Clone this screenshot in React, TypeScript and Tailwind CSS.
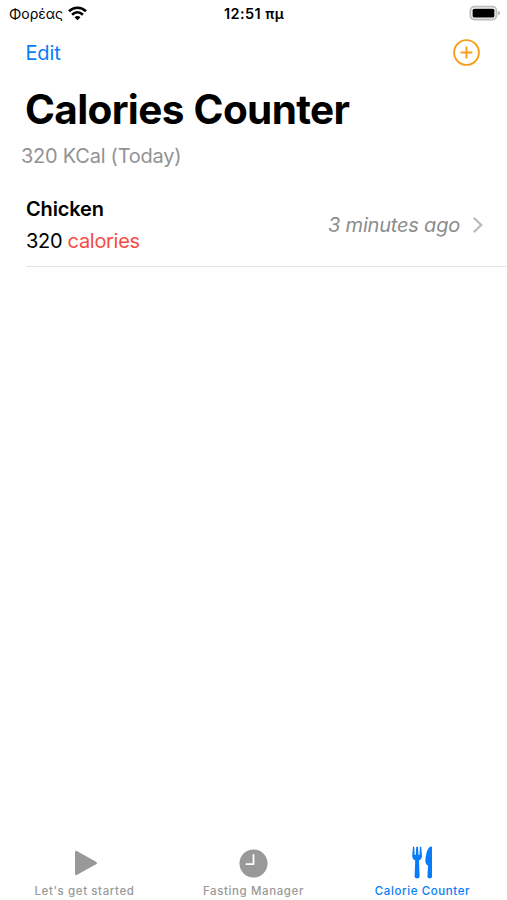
import React from "react";

function StatusBar() {
  return (
    <div className="grid h-7 grid-cols-3 items-center pl-[9px] pr-[6px] text-[14px] leading-7">
      <div className="flex items-center gap-[5px]">
        <span className="tracking-[0px]">Φορέας</span>
        <svg className="-mt-[2px]" width="19" height="15" viewBox="0 0 19 15" fill="none" stroke="#000" strokeWidth="2.6">
          <path d="M1 5.3C5.8 0.6 13.2 0.6 18 5.3" />
          <path d="M4.1 8.7C7.3 5.6 11.7 5.6 14.9 8.7" />
          <path d="M6.5 11.3C8.2 9.6 10.8 9.6 12.5 11.3L9.5 14.3Z" fill="#000" stroke="none" />
        </svg>
      </div>
      <span className="-ml-[2px] text-center text-[14.5px] font-semibold tracking-[0.4px]">12:51 πμ</span>
      <svg className="-mt-[2px] justify-self-end" width="32" height="16" viewBox="0 0 32 16">
        <rect x="1.4" y="1.7" width="26" height="12.8" rx="4" fill="#fff" stroke="#bcbcbc" strokeWidth="1.8" />
        <rect x="3.6" y="3.7" width="21.8" height="8.8" rx="1.6" fill="#000" />
        <path d="M29.2 5.7C31.4 6.5 31.4 9.5 29.2 10.3Z" fill="#a5a5a5" />
      </svg>
    </div>
  );
}

function Tab({ icon, label, active = false }: { icon: React.ReactNode; label: string; active?: boolean }) {
  return (
    <div className={`flex w-[169px] flex-col items-center ${active ? "text-[#087cf8]" : "text-[#999999]"}`}>
      <div className="flex h-10 items-center">{icon}</div>
      <span className="text-[11.5px] font-medium leading-4 tracking-[0.6px]">{label}</span>
    </div>
  );
}

export default function App() {
  return (
    <div className="flex h-[900px] w-[507px] flex-col overflow-hidden whitespace-nowrap bg-white font-['Inter','Noto_Sans',sans-serif] text-black">
      <StatusBar />
      <header className="flex h-12 items-center justify-between pl-[25.5px] pr-[27px]">
        <span className="pt-[2px] text-[20px] tracking-[-0.15px] text-[#087cf8]">Edit</span>
        <svg width="27" height="27" viewBox="0 0 27 27" fill="none" stroke="#f99d1c" strokeWidth="1.9" strokeLinecap="round">
          <circle cx="13.5" cy="13.5" r="12.4" />
          <path d="M13.5 8.3v10.4M8.3 13.5h10.4" />
        </svg>
      </header>
      <h1 className="mt-[9px] pl-[25px] text-[40.5px] font-bold leading-[50px] tracking-[-0.65px] [word-spacing:1px]">Calories Counter</h1>
      <p className="mt-[9px] pl-[21px] text-[20px] leading-6 tracking-[-0.25px] text-[#929292]">320 KCal (Today)</p>
      <div className="ml-[26px] mt-[24px] flex h-[75px] justify-between border-b border-[#e4e4e4] pr-6">
        <div className="pt-px text-[20px] leading-8 tracking-[-0.3px]">
          <div className="font-semibold tracking-[-0.15px]">Chicken</div>
          <div>320 <span className="text-[#f64b42]">calories</span></div>
        </div>
        <div className="flex h-[67px] items-center gap-[13px]">
          <span className="-mt-px text-[20px] italic tracking-[-0.2px] text-[#8c8c8c]">3 minutes ago</span>
          <svg className="-mt-px" width="10" height="16" viewBox="0 0 10 16" fill="none" stroke="#bababa" strokeWidth="2.3" strokeLinecap="round" strokeLinejoin="round">
            <path d="M1.5 1.5L8.3 8L1.5 14.5" />
          </svg>
        </div>
      </div>
      <nav className="mt-auto flex h-[57px]">
        <Tab
          label="Let's get started"
          icon={
            <svg className="ml-[3px]" width="24" height="26" viewBox="0 0 24 26" fill="currentColor">
              <path d="M1 2.5Q1 0 3.2 1.2L22 11.7Q24 13 22 14.3L3.2 24.8Q1 26 1 23.5Z" />
            </svg>
          }
        />
        <Tab
          label="Fasting Manager"
          icon={
            <svg width="29" height="29" viewBox="0 0 29 29">
              <circle cx="14.5" cy="14.5" r="14" fill="currentColor" />
              <path d="M14.5 5.8V15.2H7.5" fill="none" stroke="#fff" strokeWidth="1.8" strokeLinecap="round" strokeLinejoin="round" />
            </svg>
          }
        />
        <Tab
          active
          label="Calorie Counter"
          icon={
            <svg className="-mt-[2px]" width="21" height="33" viewBox="0 0 21 33" fill="currentColor">
              <path d="M0.9 1.2Q1.6 0 2.3 1.2L2.7 9H3.7L4.2 1.2Q5.1 0 6 1.2L6.5 9H7.5L7.9 1.2Q8.6 0 9.3 1.2L10 10.5Q10 13.2 7 14.6L7.6 30.8Q7.3 32.6 5.1 32.6Q2.9 32.6 2.6 30.8L3.2 14.6Q0.2 13.2 0.2 10.5Z" />
              <path d="M20 1.5Q20 .3 18.6 .6C15.2 2 13.4 9.5 13.4 15.5Q13.4 18 16 19.8L15.4 30.8Q15.7 32.6 17.8 32.6Q20 32.6 20 30.8Z" />
            </svg>
          }
        />
      </nav>
    </div>
  );
}
